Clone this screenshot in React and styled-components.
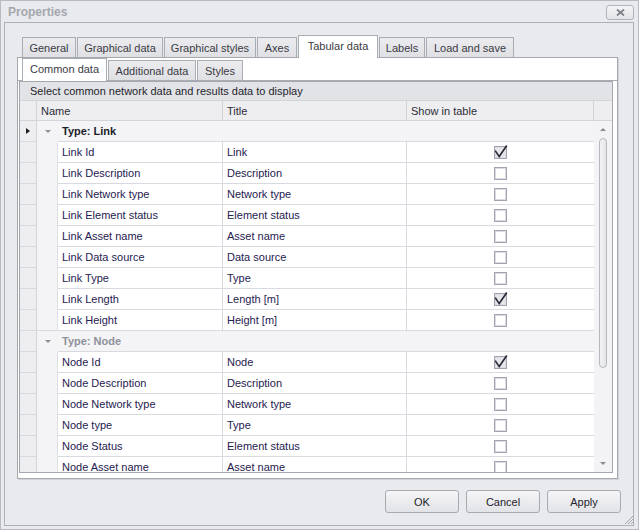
import React from 'react';
import styled, { createGlobalStyle } from 'styled-components';

const GlobalStyle = createGlobalStyle`
  html, body {
    margin: 0;
    padding: 0;
    background: #e9eaed;
  }
  body {
    font-family: "Liberation Sans", Arial, sans-serif;
    font-size: 11px;
  }
  * {
    box-sizing: border-box;
  }
`;

const Window = styled.div`
  position: relative;
  width: 639px;
  height: 530px;
  border: 1px solid #b8bac0;
  background: #e9eaed;
  display: flex;
  flex-direction: column;
`;

const TitleBar = styled.div`
  height: 21px;
  display: flex;
  align-items: center;
  justify-content: space-between;
  padding: 0 4px 0 7px;
`;

const Title = styled.div`
  font-size: 12px;
  font-weight: bold;
  color: #a4a7ae;
  margin-top: 1px;
`;

const CloseBtn = styled.div`
  width: 28px;
  height: 15px;
  margin-top: 1px;
  border: 1px solid #b2b4ba;
  border-radius: 3px;
  background: linear-gradient(#f4f4f6, #e3e4e8);
  display: flex;
  align-items: center;
  justify-content: center;
`;

const Frame = styled.div`
  flex: 1;
  margin: 0 4px 3px 3px;
  border: 1px solid #aeb0b7;
  padding: 12px;
  display: flex;
  flex-direction: column;
  min-height: 0;
`;

const TabStrip = styled.div`
  height: ${p => p.h}px;
  display: flex;
  align-items: flex-end;
  padding-left: ${p => p.indent}px;
  flex-shrink: 0;
`;

const Tab = styled.div`
  position: relative;
  width: ${p => p.w}px;
  height: ${p => (p.active ? p.h + 1 : p.h - 2)}px;
  margin-right: ${p => p.gap ?? 1}px;
  margin-bottom: ${p => (p.active ? -1 : 0)}px;
  z-index: ${p => (p.active ? 2 : 1)};
  border: 1px solid #aaacb4;
  border-bottom: none;
  background: ${p => (p.active ? '#ffffff' : 'linear-gradient(#ececef, #dfe0e4)')};
  color: #3a3b44;
  display: flex;
  align-items: center;
  justify-content: center;
  padding-bottom: ${p => (p.active ? 2 : 0)}px;
  white-space: nowrap;
`;

const Panel = styled.div`
  flex: 1;
  min-height: 0;
  margin-right: 3px;
  background: #ffffff;
  border: 1px solid #a6a8af;
  box-shadow: 1px 1px 0 #d2d3d8;
  display: flex;
  flex-direction: column;
`;

const SubPanel = styled.div`
  flex: 1;
  min-height: 0;
  border-top: 1px solid #aaacb4;
  padding: 0 4px 5px 1px;
  display: flex;
  flex-direction: column;
`;

const Grid = styled.div`
  flex: 1;
  min-height: 0;
  border: 1px solid #a5a7ae;
  display: flex;
  flex-direction: column;
  background: #ffffff;
`;

const Caption = styled.div`
  height: 19px;
  flex-shrink: 0;
  background: #e2e3e7;
  border-bottom: 1px solid #d3d4d9;
  color: #24252c;
  padding-left: 10px;
  display: flex;
  align-items: center;
`;

const HeaderRow = styled.div`
  height: 20px;
  flex-shrink: 0;
  display: flex;
  background: #eeeef1;
  border-bottom: 1px solid #d3d4d9;
`;

const HeaderCell = styled.div`
  width: ${p => p.w}px;
  flex-shrink: 0;
  border-right: ${p => (p.last ? 'none' : '1px solid #d3d4d9')};
  color: #2c2d36;
  padding-left: 4px;
  display: flex;
  align-items: center;
`;

const Body = styled.div`
  flex: 1;
  min-height: 0;
  display: flex;
`;

const Rows = styled.div`
  flex: 1;
  overflow: hidden;
`;

const Row = styled.div`
  height: 21px;
  display: flex;
`;

const Indicator = styled.div`
  width: 17px;
  flex-shrink: 0;
  background: #eeeef1;
  border-right: 1px solid #d3d4d9;
  border-bottom: 1px solid #d9dadf;
  display: flex;
  align-items: center;
  padding-left: 6px;
`;

const RowArrow = styled.div`
  width: 0;
  height: 0;
  border-top: 3.5px solid transparent;
  border-bottom: 3.5px solid transparent;
  border-left: 4px solid #1c1c22;
`;

const Indent = styled.div`
  width: 21px;
  flex-shrink: 0;
  background: #f4f4f6;
  border-right: ${p => (p.group ? 'none' : '1px solid #dedfe3')};
  border-bottom: ${p => (p.last ? '1px solid #d9dadf' : 'none')};
  display: flex;
  align-items: center;
  padding-left: 8px;
`;

const Expander = styled.div`
  width: 0;
  height: 0;
  border-left: 3px solid transparent;
  border-right: 3px solid transparent;
  border-top: 3px solid #8d8f98;
`;

const GroupLabel = styled.div`
  flex: 1;
  background: #f4f4f6;
  border-bottom: 1px solid #d9dadf;
  font-weight: bold;
  color: ${p => (p.dim ? '#8e909a' : '#1c1d2a')};
  padding-left: 4px;
  display: flex;
  align-items: center;
`;

const Cell = styled.div`
  width: ${p => p.w}px;
  flex-shrink: 0;
  border-right: ${p => (p.noRight ? 'none' : '1px solid #d9dadf')};
  border-bottom: 1px solid #d9dadf;
  color: #1f2150;
  padding-left: ${p => p.pad ?? 4}px;
  display: flex;
  align-items: center;
  justify-content: ${p => (p.center ? 'center' : 'flex-start')};
  white-space: nowrap;
`;

const ScrollBar = styled.div`
  width: 18px;
  flex-shrink: 0;
  background: #f3f3f5;
  display: flex;
  flex-direction: column;
  align-items: center;
`;

const ScrollBtn = styled.div`
  height: 17px;
  width: 100%;
  display: flex;
  align-items: center;
  justify-content: center;
  flex-shrink: 0;
`;

const ScrollArrow = styled.div`
  width: 0;
  height: 0;
  border-left: 3px solid transparent;
  border-right: 3px solid transparent;
  ${p => (p.up ? 'border-bottom: 3px solid #8a8c95;' : 'border-top: 3px solid #8a8c95;')}
`;

const Track = styled.div`
  flex: 1;
  width: 100%;
  display: flex;
  justify-content: center;
`;

const Thumb = styled.div`
  width: 8px;
  height: 230px;
  border: 1px solid #b6b8bf;
  border-radius: 4px;
  background: linear-gradient(90deg, #f2f2f4, #e4e5e9);
`;

const CheckSvg = styled.svg`
  overflow: visible;
  display: block;
`;

const ButtonRow = styled.div`
  height: 23px;
  margin-top: 11px;
  flex-shrink: 0;
  display: flex;
  justify-content: flex-end;
  gap: 7px;
`;

const Button = styled.div`
  width: 74px;
  height: 23px;
  border: 1px solid #a8aab2;
  border-radius: 3px;
  background: linear-gradient(#f5f5f7, #e2e3e7);
  color: #23242c;
  display: flex;
  align-items: center;
  justify-content: center;
`;

const Grip = styled.svg`
  position: absolute;
  right: 4px;
  bottom: 4px;
`;

const CheckBox = ({ checked }) => (
  <CheckSvg width="13" height="13" viewBox="0 0 13 13">
    <rect x="0.5" y="0.5" width="12" height="12" fill={checked ? '#e6e6eb' : '#ffffff'} stroke="#a2a3b1" />
    <rect x="1.5" y="1.5" width="10" height="10" fill="none" stroke="#dcdde4" />
    {checked && (
      <path d="M1.2 4.6 L5.2 10.6 L12.8 -0.4" fill="none" stroke="#2b2c3a" strokeWidth="1.7" />
    )}
  </CheckSvg>
);

const mainTabs = [
  { label: 'General', w: 54 },
  { label: 'Graphical data', w: 86 },
  { label: 'Graphical styles', w: 92 },
  { label: 'Axes', w: 40 },
  { label: 'Tabular data', w: 80, active: true },
  { label: 'Labels', w: 46 },
  { label: 'Load and save', w: 88 }
];

const subTabs = [
  { label: 'Common data', w: 85, active: true, gap: 1 },
  { label: 'Additional data', w: 88, gap: 1 },
  { label: 'Styles', w: 46 }
];

const rows = [
  { group: 'Type: Link', focused: true },
  { name: 'Link Id', title: 'Link', checked: true },
  { name: 'Link Description', title: 'Description' },
  { name: 'Link Network type', title: 'Network type' },
  { name: 'Link Element status', title: 'Element status' },
  { name: 'Link Asset name', title: 'Asset name' },
  { name: 'Link Data source', title: 'Data source' },
  { name: 'Link Type', title: 'Type' },
  { name: 'Link Length', title: 'Length [m]', checked: true },
  { name: 'Link Height', title: 'Height [m]', last: true },
  { group: 'Type: Node', dim: true },
  { name: 'Node Id', title: 'Node', checked: true },
  { name: 'Node Description', title: 'Description' },
  { name: 'Node Network type', title: 'Network type' },
  { name: 'Node type', title: 'Type' },
  { name: 'Node Status', title: 'Element status' },
  { name: 'Node Asset name', title: 'Asset name' }
];

function GridRow({ row }) {
  if (row.group) {
    return (
      <Row>
        <Indicator>{row.focused && <RowArrow />}</Indicator>
        <Indent group>
          <Expander />
        </Indent>
        <GroupLabel dim={row.dim}>{row.group}</GroupLabel>
      </Row>
    );
  }
  return (
    <Row>
      <Indicator />
      <Indent last={row.last} />
      <Cell w={165}>{row.name}</Cell>
      <Cell w={184}>{row.title}</Cell>
      <Cell w={187} center noRight pad={0}>
        <CheckBox checked={row.checked} />
      </Cell>
    </Row>
  );
}

export default function App() {
  return (
    <>
      <GlobalStyle />
      <Window>
        <TitleBar>
          <Title>Properties</Title>
          <CloseBtn>
            <svg width="9" height="7" viewBox="0 0 9 7">
              <path d="M1 0.5 L8 6.5 M8 0.5 L1 6.5" stroke="#7e8089" strokeWidth="1.8" />
            </svg>
          </CloseBtn>
        </TitleBar>
        <Frame>
          <TabStrip h={22} indent={5}>
            {mainTabs.map(t => (
              <Tab key={t.label} w={t.w} h={22} active={t.active}>
                {t.label}
              </Tab>
            ))}
          </TabStrip>
          <Panel>
            <TabStrip h={22} indent={4}>
              {subTabs.map(t => (
                <Tab key={t.label} w={t.w} h={22} gap={t.gap} active={t.active}>
                  {t.label}
                </Tab>
              ))}
            </TabStrip>
            <SubPanel>
              <Grid>
                <Caption>Select common network data and results data to display</Caption>
                <HeaderRow>
                  <HeaderCell w={17} />
                  <HeaderCell w={186}>Name</HeaderCell>
                  <HeaderCell w={184}>Title</HeaderCell>
                  <HeaderCell w={187}>Show in table</HeaderCell>
                  <HeaderCell w={18} last />
                </HeaderRow>
                <Body>
                  <Rows>
                    {rows.map((r, i) => (
                      <GridRow key={i} row={r} />
                    ))}
                  </Rows>
                  <ScrollBar>
                    <ScrollBtn>
                      <ScrollArrow up />
                    </ScrollBtn>
                    <Track>
                      <Thumb />
                    </Track>
                    <ScrollBtn>
                      <ScrollArrow />
                    </ScrollBtn>
                  </ScrollBar>
                </Body>
              </Grid>
            </SubPanel>
          </Panel>
          <ButtonRow>
            <Button>OK</Button>
            <Button>Cancel</Button>
            <Button>Apply</Button>
          </ButtonRow>
        </Frame>
        <Grip width="11" height="11" viewBox="0 0 11 11">
          <path d="M10 2 L2 10 M10 5 L5 10 M10 8 L8 10" stroke="#a3a5ad" strokeWidth="1" />
        </Grip>
      </Window>
    </>
  );
}
